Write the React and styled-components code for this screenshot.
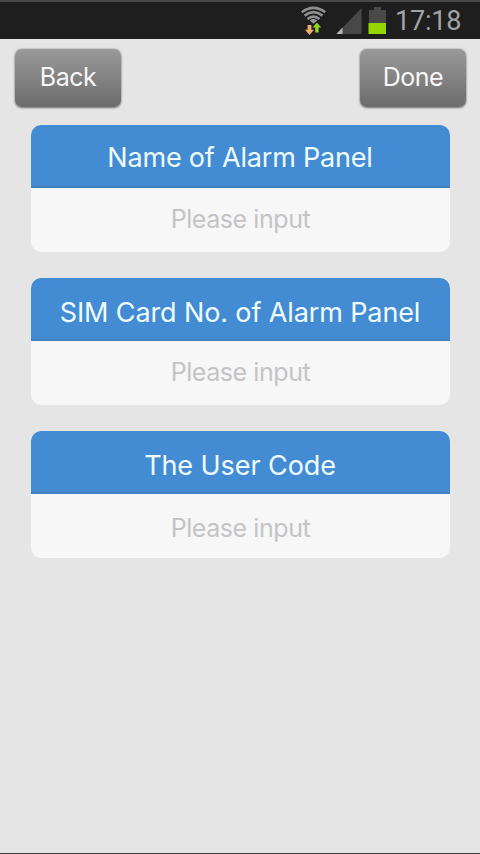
import React from "react";
import styled, { createGlobalStyle } from "styled-components";

const GlobalStyle = createGlobalStyle`
  * { box-sizing: border-box; }
  body { margin: 0; background: #e5e5e5; }
`;

const Screen = styled.main`
  width: 480px;
  height: 854px;
  display: flex;
  flex-direction: column;
  overflow: hidden;
  background: #e5e5e5;
  border-bottom: 1px solid #3a3a3a;
  font-family: Inter, "Liberation Sans", sans-serif;
`;

const StatusBar = styled.header`
  height: 39px;
  flex: none;
  display: flex;
  align-items: flex-start;
  justify-content: flex-end;
  padding-right: 18px;
  background: #1e1e1e;
  border-top: 2px solid #494949;
`;

const StatusIcons = styled.svg`
  width: 90px;
  height: 36px;
  margin-right: 5px;
`;

const Clock = styled.time`
  width: 67px;
  color: #a3a3a3;
  font: 400 27px/38px Roboto, sans-serif;
  letter-spacing: -0.2px;
  white-space: nowrap;
`;

const Toolbar = styled.nav`
  display: flex;
  justify-content: space-between;
  padding: 10px 14px 0 15px;
`;

const ToolButton = styled.button`
  width: 106px;
  height: 58px;
  padding: 0 0 3px;
  border: 0;
  border-radius: 7px;
  background: linear-gradient(#999 0%, #858585 45%, #6c6c6c 100%);
  box-shadow: 0 0 2px #8d8d8d, 0 1px 2px #777;
  color: #f8f8f8;
  font: 400 25px/54px Inter, sans-serif;
  letter-spacing: -0.5px;
`;

const Fields = styled.form`
  display: flex;
  flex-direction: column;
  gap: 26px;
  padding: 18px 30.5px 0;
`;

const Card = styled.label`
  display: block;
  height: 127px;
  border-radius: 10px;
  overflow: hidden;
  background: #f7f7f7;
`;

const CardTitle = styled.span`
  display: block;
  height: 63px;
  padding-top: ${(p) => p.$drop}px;
  background: #438cd3;
  border-bottom: 2px solid #4480bd;
  color: #effcff;
  font-size: 27px;
  line-height: 60px;
  letter-spacing: ${(p) => p.$tracking};
  text-align: center;
  white-space: nowrap;
`;

const CardInput = styled.input`
  display: block;
  width: 100%;
  height: 62px;
  padding: ${(p) => p.$drop}px 0 0 1px;
  border: 0;
  outline: 0;
  background: transparent;
  color: #555;
  font: 400 25px/56px Inter, sans-serif;
  letter-spacing: -0.42px;
  text-align: center;
  &::placeholder { color: #c4c4c6; opacity: 1; }
`;

const fields = [
  { title: "Name of Alarm Panel", tracking: "-0.2px", drop: 3, inputDrop: 0 },
  { title: "SIM Card No. of Alarm Panel", tracking: "-0.12px", drop: 5, inputDrop: 0 },
  { title: "The User Code", tracking: "-0.08px", drop: 5, inputDrop: 6 },
];

function StatusGlyphs() {
  return (
    <StatusIcons viewBox="300 2 90 36" aria-hidden="true">
      <g fill="none" stroke="#8f8f8f" strokeWidth="2.6">
        <path d="M301.8 12.2Q313.5 3.6 325.2 12.2" />
        <path d="M304.5 15.6Q313.5 8.8 322.5 15.6" />
        <path d="M307.5 19Q313.5 14.2 319.5 19" />
      </g>
      <path d="M309.8 20.4Q313.5 17.8 317.2 20.4L313.5 23.8Z" fill="#999" />
      <path d="M307.6 25h3.8v4.8h2.6l-4.5 5.2-4.5-5.2h2.6z" fill="#efad6c" />
      <path d="M315.2 32.5v-5h-2.6l4.3-5 4.3 5h-2.6v5z" fill="#8fd522" />
      <path d="M361.5 8v26h-25z" fill="#484848" />
      <path d="M342.5 27.5V34h-6.2z" fill="#b5b5b5" />
      <path d="M369 10h5V7h7v3h5v13h-17z" fill="#494949" />
      <path d="M368.5 23H386v11h-17.5z" fill="#96d602" />
    </StatusIcons>
  );
}

export default function App() {
  return (
    <Screen>
      <GlobalStyle />
      <StatusBar>
        <StatusGlyphs />
        <Clock>17:18</Clock>
      </StatusBar>
      <Toolbar>
        <ToolButton type="button">Back</ToolButton>
        <ToolButton type="button">Done</ToolButton>
      </Toolbar>
      <Fields>
        {fields.map((f) => (
          <Card key={f.title}>
            <CardTitle $drop={f.drop} $tracking={f.tracking}>{f.title}</CardTitle>
            <CardInput placeholder="Please input" $drop={f.inputDrop} />
          </Card>
        ))}
      </Fields>
    </Screen>
  );
}
